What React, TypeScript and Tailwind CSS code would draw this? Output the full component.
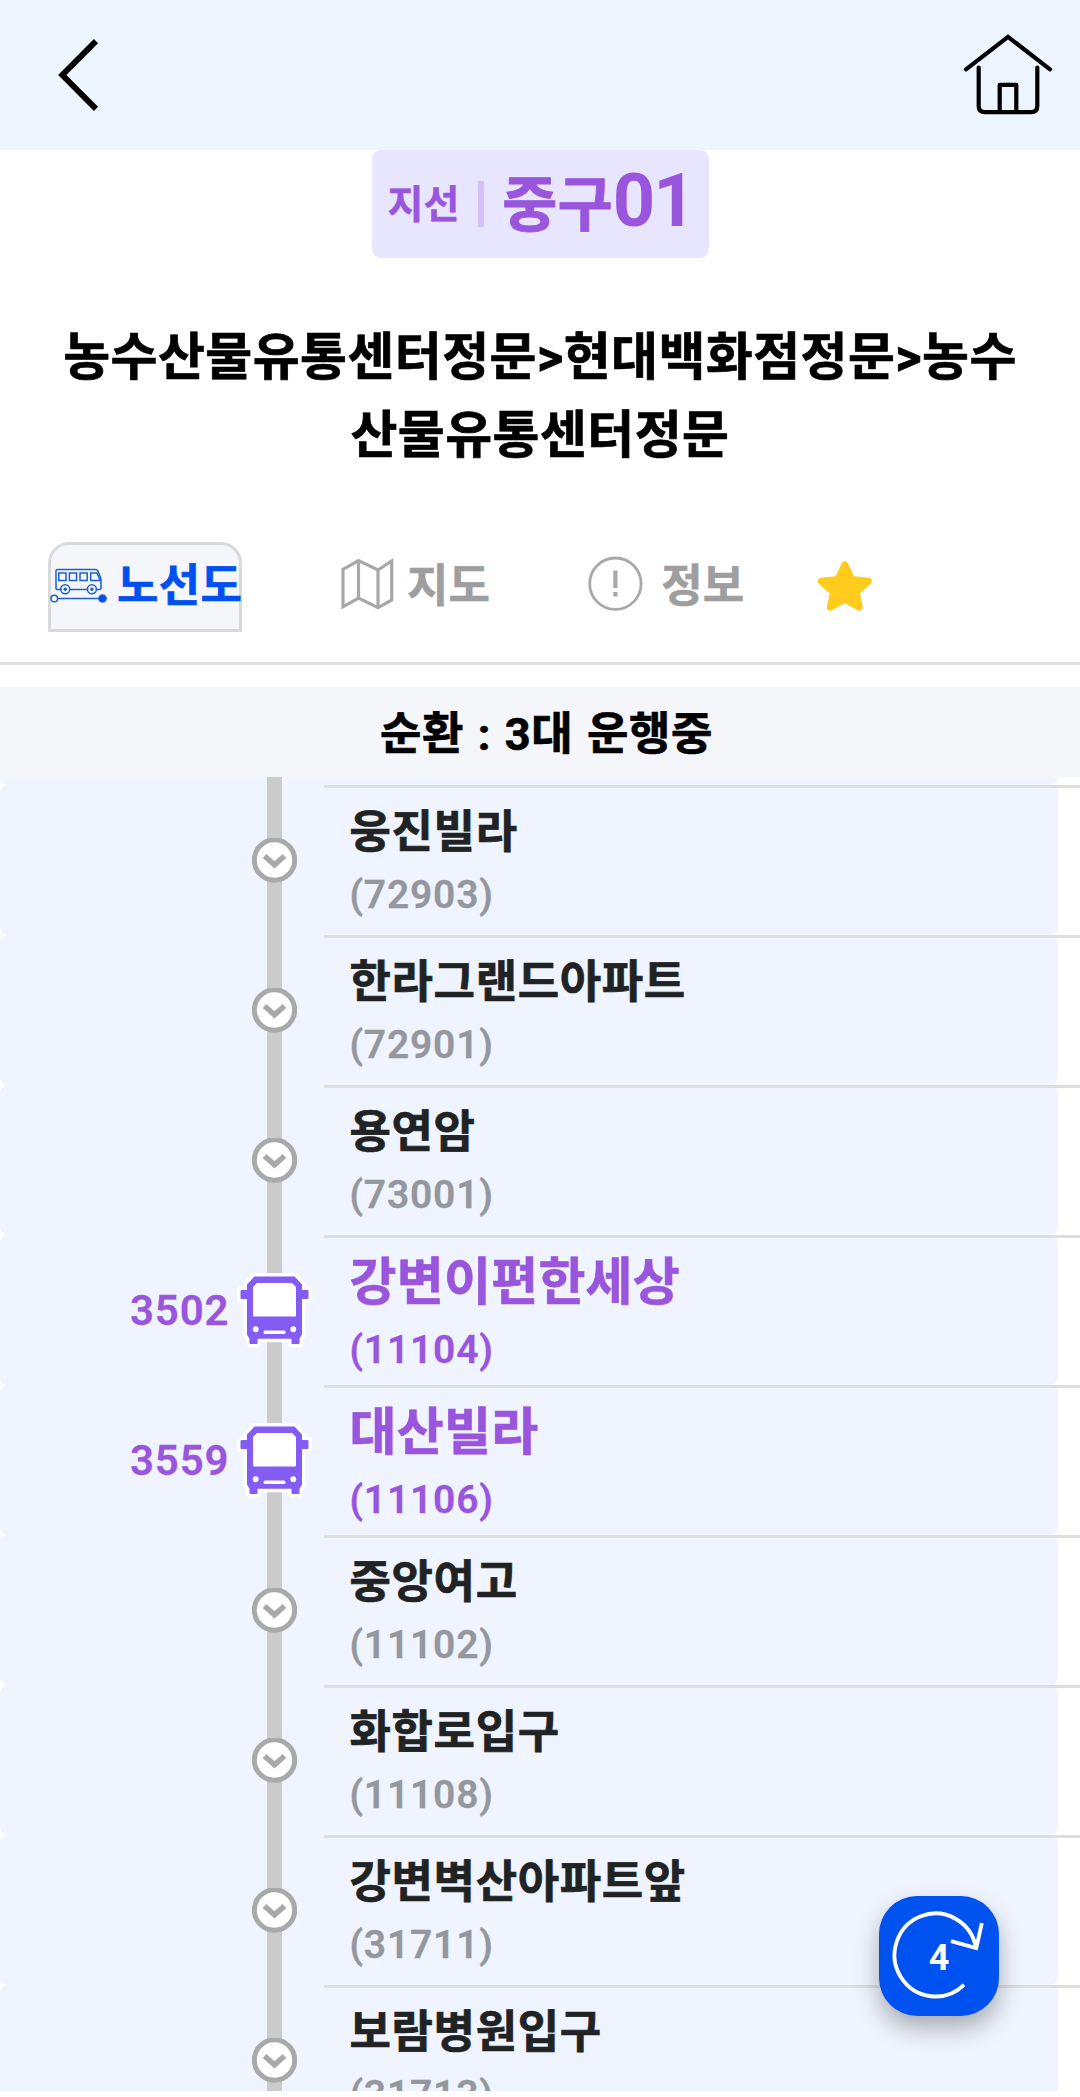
const KR = "font-['Roboto','Noto_Sans_CJK_KR',sans-serif]";

type Stop = { name: string; code: string; bus?: string };

const stops: Stop[] = [
  { name: "웅진빌라", code: "(72903)" },
  { name: "한라그랜드아파트", code: "(72901)" },
  { name: "용연암", code: "(73001)" },
  { name: "강변이편한세상", code: "(11104)", bus: "3502" },
  { name: "대산빌라", code: "(11106)", bus: "3559" },
  { name: "중앙여고", code: "(11102)" },
  { name: "화합로입구", code: "(11108)" },
  { name: "강변벽산아파트앞", code: "(31711)" },
  { name: "보람병원입구", code: "(31713)" },
];

function BackIcon() {
  return (
    <svg width="50" height="80" viewBox="54 35 50 80" fill="none" stroke="#000" strokeWidth="5.9">
      <path d="M96 41.2 62.3 75 96 108.8" />
    </svg>
  );
}

function HomeIcon() {
  return (
    <svg width="90" height="84" viewBox="963 33 90 84" fill="none" stroke="#000" strokeWidth="4.2" strokeLinecap="round">
      <path d="M966 69.3 1008 36.8 1050 69.3" />
      <path d="M978.7 67.5V106q0 6.2 6.2 6.2h46.2q6.2 0 6.2-6.2V67.5" />
      <path d="M999.7 111V84.8h16.6V111" strokeLinejoin="round" />
    </svg>
  );
}

function RouteIcon() {
  return (
    <svg width="57" height="38" viewBox="49.5 566 57 38" fill="none" stroke="#1d5fd0" strokeWidth="1.5">
      <path d="M61 589.5H56.5q-1 0-1-1V571q0-1.500 1.500-1.500h38q1.500 0 2.500 1.500l3 8v9q0 1.500-1.500 1.500H96M69 589.500h18" />
      <path d="M58.300 573h7.200v7.500h-7.200zM68.900 573h7.200v7.500h-7.200zM79.500 573h7.200v7.500h-7.200zM90.200 573h6.300l3.300 7.500h-9.600z" />
      <circle cx="64.700" cy="589.300" r="4.500" />
      <circle cx="91.400" cy="589.300" r="4.500" />
      <circle cx="64.700" cy="589.300" r="1" fill="#1d5fd0" />
      <circle cx="91.400" cy="589.300" r="1" fill="#1d5fd0" />
      <path d="M57 598.500h43" />
      <circle cx="53.800" cy="598.500" r="3.300" fill="#fff" />
      <circle cx="102" cy="598.500" r="3.600" fill="#0050f0" />
    </svg>
  );
}

function MapIcon() {
  return (
    <svg width="54" height="54" viewBox="340 557 54 54" fill="none" stroke="#a8a8a8" strokeWidth="3.200">
      <path d="M343 569.300 358.500 560.500 378 570 391.700 561V600L378 607.800 358.500 598 343 606.800ZM358.500 560.500V598M378 570V607.800" />
    </svg>
  );
}

function InfoIcon() {
  return (
    <svg width="56" height="56" viewBox="587 556 56 56" fill="none" stroke="#a8a8a8" strokeWidth="2.800">
      <circle cx="615.400" cy="583.700" r="25.700" />
      <path d="M615.400 570.500V588M615.400 592V596.500" strokeWidth="4.200" />
    </svg>
  );
}

function StarIcon() {
  return (
    <svg width="56" height="54" viewBox="817 559 56 54" fill="#ffcb1c" stroke="#ffcb1c" strokeWidth="7" strokeLinejoin="round">
      <path d="M844.800 565 851.700 579.500 868.300 581.300 856 592 859.300 607.200 844.800 599.300 830.300 607.200 833.600 592 821.300 581.300 837.900 579.500Z" />
    </svg>
  );
}

function StopIcon() {
  return (
    <svg width="45" height="45" viewBox="0 0 45 45" fill="none" stroke="#a9a9a9">
      <circle cx="22.500" cy="22" r="20.200" fill="#fff" strokeWidth="5" />
      <path d="m12.500 18 10 8.800 10-8.800" strokeWidth="5.500" />
    </svg>
  );
}

const busShape =
  "M17.500 4.500h40l7.500 8V18h5.500q1 0 1 1v7q0 1-1 1H65v35.500l-2.500 4.200V71q0 1-1 1h-6q-1 0-1-1v-4.300h-34V71q0 1-1 1h-6q-1 0-1-1v-4.300L10 62.500V27H4.500q-1 0-1-1v-7q0-1 1-1H10v-5.500z";

function BusIcon() {
  return (
    <svg width="75" height="76" viewBox="0 0 75 76">
      <path d={busShape} fill="#fff" stroke="#fff" strokeWidth="7" strokeLinejoin="round" />
      <path d={busShape} fill="#835cf4" />
      <path d="M20 11h35l4 4v28.500q0 1-1 1H17q-1 0-1-1V15z" fill="#fff" />
      <ellipse cx="18.700" cy="57.300" rx="2.900" ry="3" fill="#fff" />
      <ellipse cx="56.300" cy="57.300" rx="2.900" ry="3" fill="#fff" />
      <rect x="26.500" y="58.500" width="22" height="3.500" rx="1.500" fill="#fff" />
    </svg>
  );
}

function StopRow({ name, code, bus }: Stop) {
  return (
    <li className="relative flex h-[150px] shrink-0">
      <div className="flex w-[1058px] rounded-[8px] bg-[#eff4ff]">
        <div className="flex w-[229.500px] items-center justify-end text-[42px] font-semibold tracking-[0.900px] text-[#9956dc] [-webkit-text-stroke:0.300px_#9956dc]">
          {bus}
        </div>
        <div className="relative ml-[37.500px] flex w-[15px] items-center justify-center bg-[#cbcbcb]">
          <div className="shrink-0">{bus ? <BusIcon /> : <StopIcon />}</div>
        </div>
        <div className={bus ? "ml-[67.500px] pt-[11px]" : "ml-[67.500px] pt-[13px]"}>
          <div
            className={
              bus
                ? "h-[76px] text-[51px] leading-[74px] font-bold tracking-[0.300px] whitespace-nowrap text-[#9956dc] [-webkit-text-stroke:0.700px_#9956dc]"
                : "h-[69px] text-[45px] leading-[70px] font-bold tracking-[0.650px] whitespace-nowrap text-[#202224] [-webkit-text-stroke:0.700px_#202224]"
            }
          >
            {name}
          </div>
          <div
            className={
              bus
                ? "text-[39px] leading-[56px] font-semibold tracking-[0.800px] text-[#9956dc] [-webkit-text-stroke:0.300px_#9956dc]"
                : "text-[39px] leading-[56px] font-semibold tracking-[0.800px] text-[#94979e] [-webkit-text-stroke:0.300px_#94979e]"
            }
          >
            {code}
          </div>
        </div>
      </div>
      <div className="absolute top-0 right-0 left-[324px] h-[3px] bg-[#dedede]" />
    </li>
  );
}

export default function App() {
  return (
    <div className={`${KR} relative flex h-[2097px] w-[1080px] flex-col overflow-hidden bg-white`}>
      <header className="flex h-[150px] shrink-0 items-center justify-between bg-[#edf5ff] pr-[27px] pl-[54px]">
        <BackIcon />
        <HomeIcon />
      </header>

      <section className="flex shrink-0 flex-col items-center">
        <div className="flex h-[108px] w-[337px] items-center rounded-[9px] bg-[#e8e5ff] pl-[16px] text-[#9956dc]">
          <span className="mt-[2px] text-[39px] font-bold [-webkit-text-stroke:0.500px_#9956dc]">지선</span>
          <span className="ml-[19px] h-[46px] w-[6px] bg-[#d3c0f5]" />
          <span className="-mt-[8px] ml-[18px] text-[60px] font-bold whitespace-nowrap">
            <span className="[-webkit-text-stroke:0.800px_#9956dc]">중구</span>
            <span className="text-[74px] tracking-[-2px]">01</span>
          </span>
        </div>
        <h1 className="mt-[61px] h-[155px] text-center text-[51px] leading-[78px] font-bold tracking-[0.450px] whitespace-nowrap text-black [-webkit-text-stroke:0.700px_#000]">
          농수산물유통센터정문&gt;현대백화점정문&gt;농수
          <br />
          산물유통센터정문
        </h1>
      </section>

      <nav className="mt-[68px] flex h-[120px] shrink-0 items-start text-[45px] leading-[84px] font-bold text-[#9e9e9e] [-webkit-text-stroke:0.600px]">
        <div className="ml-[48px] flex h-[90px] w-[194px] rounded-t-[21px] border-[3px] border-[#d9d9d9] bg-[#f4f6fa] whitespace-nowrap text-[#0050f0]">
          <div className="mt-[21px] -ml-[1px] shrink-0"><RouteIcon /></div>
          <span className="ml-[10px] tracking-[0.300px]">노선도</span>
        </div>
        <div className="mt-[3px] ml-[98px] flex">
          <div className="mt-[12px]"><MapIcon /></div>
          <span className="ml-[13px] tracking-[0.200px]">지도</span>
        </div>
        <div className="mt-[3px] ml-[97px] flex">
          <div className="mt-[11px]"><InfoIcon /></div>
          <span className="ml-[18px] tracking-[0.200px]">정보</span>
        </div>
        <div className="mt-[17px] ml-[73px]"><StarIcon /></div>
      </nav>
      <div className="h-[3px] shrink-0 bg-[#dfdfdf]" />

      <div className="mt-[22px] flex h-[90px] shrink-0 items-center justify-center bg-[#f4f6fa] pt-[5px] pl-[13px] text-[45px] font-bold tracking-[0.600px] text-black [-webkit-text-stroke:0.700px_#000] [word-spacing:2px]">
        순환 : 3대 운행중
      </div>

      <ul className="flex h-[1314px] shrink-0 flex-col overflow-hidden">
        <li className="h-[8px] w-[1058px] shrink-0 rounded-b-[8px] bg-[#eff4ff] pl-[267px]">
          <div className="h-full w-[15px] bg-[#cbcbcb]" />
        </li>
        {stops.map((s) => (
          <StopRow key={s.name} {...s} />
        ))}
      </ul>

      <button className="absolute top-[1896px] left-[879px] flex h-[120px] w-[120px] items-center justify-center rounded-[38px] bg-[#0052f0] text-[36px] font-bold text-white shadow-[0_12px_24px_rgba(0,0,0,0.3)]">
        <svg className="absolute inset-0" width="120" height="120" viewBox="0 0 120 120" fill="none" stroke="#fff" strokeWidth="3.900">
          <path d="M85 88.300A41 41.500 0 1 1 97 51.500M72 44.500 97.300 51.500 102.800 26.500" transform="translate(0 .6)" />
        </svg>
        <span className="relative top-[2px]">4</span>
      </button>
    </div>
  );
}
